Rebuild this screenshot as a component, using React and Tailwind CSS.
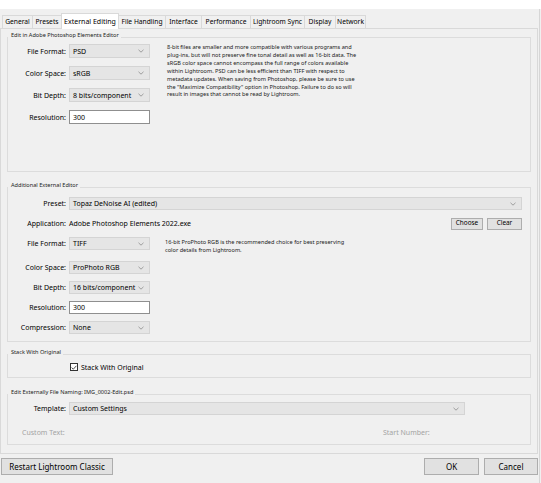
import React from "react";

const Chevron = () => (
  <svg width="6" height="4" viewBox="0 0 6 4" className="shrink-0">
    <polyline points="0.5,0.8 3,3.2 5.5,0.8" fill="none" stroke="#8a8a8a" strokeWidth="0.8" />
  </svg>
);

const Select = ({ value, className }) => (
  <div
    className={`flex items-center justify-between border border-[#d4d4d4] bg-[#e5e5e5] pl-[3px] pr-[5px] ${className}`}
  >
    <span className="text-[7px] leading-none text-black">{value}</span>
    <Chevron />
  </div>
);

const Input = ({ value, className }) => (
  <div className={`flex items-center border border-[#8f8f8f] bg-white pl-[3px] ${className}`}>
    <span className="text-[7px] leading-none text-black">{value}</span>
  </div>
);

const Row = ({ label, children, className = "" }) => (
  <div className={`flex items-center ${className}`}>
    <div className="w-[58px] whitespace-nowrap text-right text-[7px] leading-none text-black">{label}</div>
    <div className="ml-[3px] flex items-center">{children}</div>
  </div>
);

const Group = ({ title, className = "", boxClass = "", children }) => (
  <div className={`ml-[6px] w-[524px] ${className}`}>
    <div className="relative z-10 ml-[1px] w-fit bg-[#f0f0f0] pl-[3px] pr-[2px] text-[5.6px] leading-[8px] text-[#222]">
      {title}
    </div>
    <div className={`-mt-[2px] border border-[#dcdcdc] ${boxClass}`}>{children}</div>
  </div>
);

const Button = ({ children, className = "" }) => (
  <div
    className={`flex items-center justify-center border border-[#adadad] bg-[#e1e1e1] text-black ${className}`}
  >
    {children}
  </div>
);

const tabs = [
  { name: "General", w: "w-[31px]" },
  { name: "Presets", w: "w-[30px]" },
  { name: "External Editing", w: "w-[58px]", active: true },
  { name: "File Handling", w: "w-[48px]" },
  { name: "Interface", w: "w-[37px]" },
  { name: "Performance", w: "w-[50px]" },
  { name: "Lightroom Sync", w: "w-[55px]" },
  { name: "Display", w: "w-[32px]" },
  { name: "Network", w: "w-[31px]" },
];

export default function App() {
  return (
    <div className="relative h-[483px] w-[541px] overflow-hidden bg-[#f0f0f0] font-['Noto_Sans',sans-serif]">
      {/* title bar remnant */}
      <div className="h-[9px] bg-white" />

      {/* tabs */}
      <div className="flex h-[19px] items-end pl-[2px]">
        {tabs.map((tab) =>
          tab.active ? (
            <div
              key={tab.name}
              className={`relative z-20 -mb-[1px] -mr-[1px] flex h-[16px] items-center justify-center whitespace-nowrap border-x border-t border-[#d9d9d9] bg-white text-[7px] leading-none text-black ${tab.w}`}
            >
              {tab.name}
            </div>
          ) : (
            <div
              key={tab.name}
              className={`-mr-[1px] flex h-[13px] items-center justify-center whitespace-nowrap border-x border-t border-[#d9d9d9] bg-[#f0f0f0] text-[6.7px] leading-none text-black ${tab.w}`}
            >
              {tab.name}
            </div>
          )
        )}
      </div>

      {/* panel */}
      <div className="h-[426px] w-[538px] border border-[#d9d9d9] pt-[2px]">
        <Group title="Edit in Adobe Photoshop Elements Editor" boxClass="h-[135px] pt-[6px]">
          <div className="flex">
            <div className="flex flex-col gap-[8px]">
              <Row label="File Format:">
                <Select value="PSD" className="h-[14px] w-[81px]" />
              </Row>
              <Row label="Color Space:">
                <Select value="sRGB" className="h-[14px] w-[81px]" />
              </Row>
              <Row label="Bit Depth:">
                <Select value="8 bits/component" className="h-[14px] w-[81px]" />
              </Row>
              <Row label="Resolution:">
                <Input value="300" className="h-[14px] w-[81px]" />
              </Row>
            </div>
            <div className="ml-[17px] whitespace-nowrap text-[5.6px] leading-[7.9px] text-[#1a1a1a]">
              8-bit files are smaller and more compatible with various programs and
              <br />
              plug-ins, but will not preserve fine tonal detail as well as 16-bit data. The
              <br />
              sRGB color space cannot encompass the full range of colors available
              <br />
              within Lightroom. PSD can be less efficient than TIFF with respect to
              <br />
              metadata updates. When saving from Photoshop, please be sure to use
              <br />
              the "Maximize Compatibility" option in Photoshop. Failure to do so will
              <br />
              result in images that cannot be read by Lightroom.
            </div>
          </div>
        </Group>

        <Group title="Additional External Editor" className="mt-[9px]" boxClass="h-[155px] pt-[9px]">
          <div className="flex flex-col gap-[7px]">
            <Row label="Preset:">
              <Select value="Topaz DeNoise AI (edited)" className="h-[13px] w-[453px]" />
            </Row>
            <div className="flex h-[13px] items-center">
              <div className="w-[58px] text-right text-[7px] leading-none text-black">Application:</div>
              <div className="ml-[3px] w-[382px] text-[7px] leading-none text-black">
                Adobe Photoshop Elements 2022.exe
              </div>
              <Button className="h-[12px] w-[32px] text-[6.4px] leading-none">Choose</Button>
              <Button className="ml-[4px] h-[12px] w-[35px] text-[6.4px] leading-none">Clear</Button>
            </div>
            <div className="flex items-start">
              <Row label="File Format:" className="h-[13px]">
                <Select value="TIFF" className="h-[13px] w-[81px]" />
              </Row>
              <div className="ml-[15px] mt-[1px] whitespace-nowrap text-[5.6px] leading-[8px] text-[#1a1a1a]">
                16-bit ProPhoto RGB is the recommended choice for best preserving
                <br />
                color details from Lightroom.
              </div>
            </div>
            <Row label="Color Space:" className="h-[13px]">
              <Select value="ProPhoto RGB" className="h-[13px] w-[81px]" />
            </Row>
            <Row label="Bit Depth:" className="h-[13px]">
              <Select value="16 bits/component" className="h-[13px] w-[81px]" />
            </Row>
            <Row label="Resolution:" className="h-[13px]">
              <Input value="300" className="h-[13px] w-[81px]" />
            </Row>
            <Row label="Compression:" className="h-[13px]">
              <Select value="None" className="h-[13px] w-[81px]" />
            </Row>
          </div>
        </Group>

        <Group title="Stack With Original" className="mt-[6px]" boxClass="h-[24px] pt-[7px]">
          <div className="flex h-[10px] items-center pl-[62px]">
            <div className="flex h-[8px] w-[8px] items-center justify-center border border-[#333] bg-white">
              <svg width="6" height="5" viewBox="0 0 6 5">
                <polyline points="0.6,2.6 2.3,4.2 5.4,0.8" fill="none" stroke="#222" strokeWidth="0.8" />
              </svg>
            </div>
            <span className="ml-[3px] text-[7px] leading-none text-black">Stack With Original</span>
          </div>
        </Group>

        <Group
          title="Edit Externally File Naming:  IMG_0002-Edit.psd"
          className="mt-[10px]"
          boxClass="h-[51px] pt-[7px]"
        >
          <Row label="Template:" className="h-[13px]">
            <Select value="Custom Settings" className="h-[13px] w-[396px]" />
          </Row>
          <div className="mt-[12px] flex h-[10px] items-center pl-[14px] text-[7px] leading-none text-[#a3a3a3]">
            <div className="w-[361px]">Custom Text:</div>
            <div>Start Number:</div>
          </div>
        </Group>
      </div>

      {/* bottom buttons */}
      <div className="mt-[4px] flex h-[17px] items-center pl-[1px] pr-[3px]">
        <Button className="h-[17px] w-[112px] text-[8px] leading-none">Restart Lightroom Classic</Button>
        <div className="flex-1" />
        <Button className="h-[17px] w-[55px] text-[8px] leading-none">OK</Button>
        <Button className="ml-[5px] h-[17px] w-[54px] text-[8px] leading-none">Cancel</Button>
      </div>

      {/* window edge */}
      <div className="absolute right-[1px] top-[9px] h-[474px] w-[1px] bg-[#d6d6d6]" />
    </div>
  );
}
